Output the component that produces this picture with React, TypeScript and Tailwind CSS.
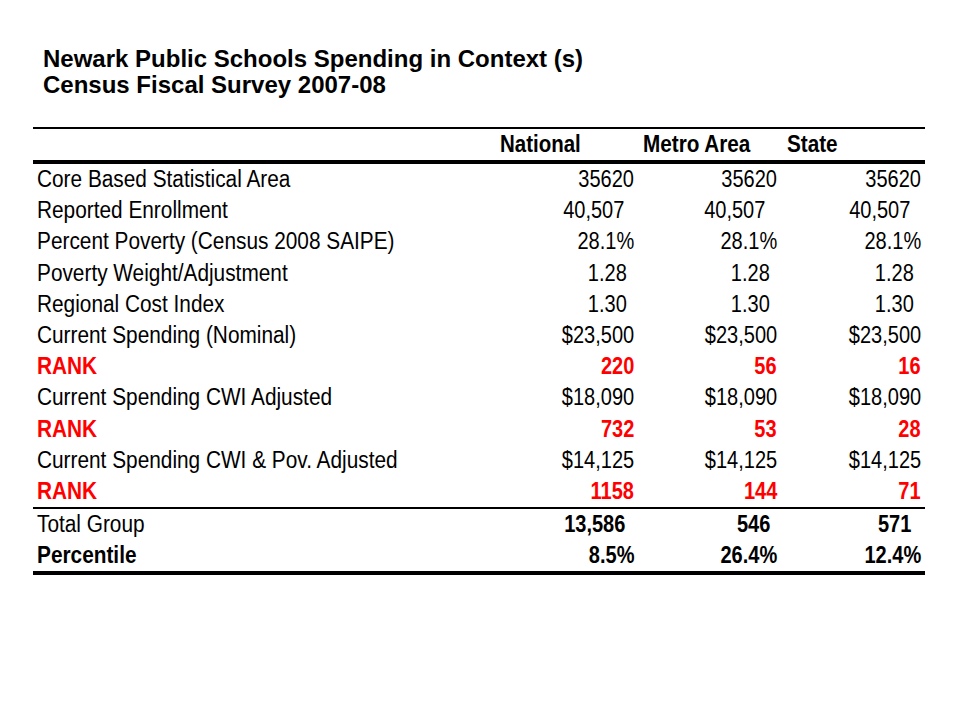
import React from "react";

type Cell = [string, number];
type Row = { label: string; vals: Cell[]; red?: boolean; boldLabel?: boolean; boldVals?: boolean };

const rows: Row[] = [
  { label: "Core Based Statistical Area", vals: [["35620", 0], ["35620", 0], ["35620", 0]] },
  { label: "Reported Enrollment", vals: [["40,507", 10], ["40,507", 12], ["40,507", 11]] },
  { label: "Percent Poverty (Census 2008 SAIPE)", vals: [["28.1%", 0], ["28.1%", 0], ["28.1%", 0]] },
  { label: "Poverty Weight/Adjustment", vals: [["1.28", 7], ["1.28", 7], ["1.28", 7]] },
  { label: "Regional Cost Index", vals: [["1.30", 7], ["1.30", 7], ["1.30", 7]] },
  { label: "Current Spending (Nominal)", vals: [["$23,500", 0], ["$23,500", 0], ["$23,500", 0]] },
  { label: "RANK", red: true, boldLabel: true, boldVals: true, vals: [["220", 0], ["56", 0], ["16", 0]] },
  { label: "Current Spending CWI Adjusted", vals: [["$18,090", 0], ["$18,090", 0], ["$18,090", 0]] },
  { label: "RANK", red: true, boldLabel: true, boldVals: true, vals: [["732", 0], ["53", 0], ["28", 0]] },
  { label: "Current Spending CWI & Pov. Adjusted", vals: [["$14,125", 0], ["$14,125", 0], ["$14,125", 0]] },
  { label: "RANK", red: true, boldLabel: true, boldVals: true, vals: [["1158", 0], ["144", 0], ["71", 0]] },
];

const bottomRows: Row[] = [
  { label: "Total Group", boldVals: true, vals: [["13,586", 9], ["546", 7], ["571", 10]] },
  { label: "Percentile", boldLabel: true, boldVals: true, vals: [["8.5%", 0], ["26.4%", 0], ["12.4%", 0]] },
];

function TableRow({ r, h }: { r: Row; h: string }) {
  const color = r.red ? "text-[#f00]" : "text-black";
  return (
    <div className={`flex items-center ${h} ${color} text-[23px] leading-none`}>
      <div className={`flex-1 pl-[4px] whitespace-nowrap ${r.boldLabel ? "font-bold" : ""}`}>
        <span className="inline-block origin-left scale-x-[0.905]">{r.label}</span>
      </div>
      {r.vals.map(([v, off], i) => (
        <div
          key={i}
          className={`text-right whitespace-nowrap ${i === 2 ? "w-[148px]" : "w-[143px]"} ${r.boldVals ? "font-bold" : ""}`}
        >
          <span className="inline-block" style={{ paddingRight: off + (i === 2 ? 4 : 0) }}>
            <span className="inline-block origin-right scale-x-[0.87]">{v}</span>
          </span>
        </div>
      ))}
    </div>
  );
}

export default function App() {
  return (
    <div className="w-[960px] h-[720px] bg-white relative overflow-hidden font-['Liberation_Sans',Arial,sans-serif]">
      <div className="pt-[46px] pl-[43px] font-bold text-[24px] leading-[26px] text-black">
        <div>Newark Public Schools Spending in Context (s)</div>
        <div>Census Fiscal Survey 2007-08</div>
      </div>
      <div className="ml-[33px] mt-[29px] w-[892px]">
        <div className="h-[2px] bg-black" />
        <div className="flex items-center h-[31px] text-[23px] font-bold leading-none text-black whitespace-nowrap">
          <div className="w-[467px]" />
          <div className="w-[143px]">
            <span className="inline-block origin-left scale-x-[0.89]">National</span>
          </div>
          <div className="w-[144px]">
            <span className="inline-block origin-left scale-x-[0.9]">Metro Area</span>
          </div>
          <div>
            <span className="inline-block origin-left scale-x-[0.9]">State</span>
          </div>
        </div>
        <div className="h-[4px] bg-black" />
        {rows.map((r, i) => (
          <TableRow key={i} r={r} h="h-[31.2px]" />
        ))}
        <div className="h-[2px] bg-black" />
        {bottomRows.map((r, i) => (
          <TableRow key={i} r={r} h="h-[31px]" />
        ))}
        <div className="h-[4px] bg-black" />
      </div>
    </div>
  );
}
